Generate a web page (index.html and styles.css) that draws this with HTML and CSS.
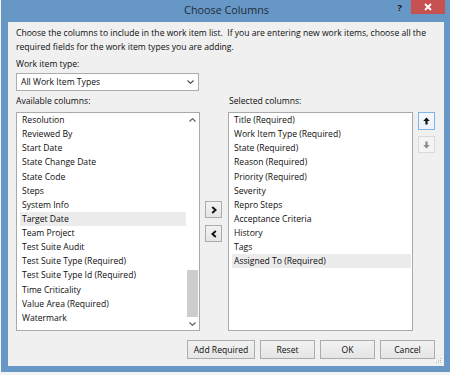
FILE: index.html
```html
<!DOCTYPE html>
<html lang="en">
<head>
  <meta charset="UTF-8">
  <title>Choose Columns</title>
  <link rel="stylesheet" href="styles.css">
</head>
<body>
  <div class="window">
    <div class="titlebar">
      <span></span>
      <span class="title">Choose Columns</span>
      <div class="controls">
        <span class="help">?</span>
        <span class="close">
          <svg width="8" height="8" viewBox="0 0 8 8"><path d="M1 1 L7 7 M7 1 L1 7" stroke="#fff" stroke-width="1.8" fill="none"/></svg>
        </span>
      </div>
    </div>

    <div class="content">
      <p class="intro">Choose the columns to include in the work item list.&nbsp; If you are entering new work items, choose all the<br>required fields for the work item types you are adding.</p>

      <div class="label">Work item type:</div>
      <div class="select">
        <span>All Work Item Types</span>
        <svg width="7" height="4" viewBox="0 0 7 4"><path d="M0.5 0.5 L3.5 3.3 L6.5 0.5" stroke="#444" stroke-width="1.1" fill="none"/></svg>
      </div>

      <div class="columns">
        <div class="label">Available columns:</div>
        <div></div>
        <div class="label label-right">Selected columns:</div>
        <div></div>

        <div class="listbox">
          <ul class="items">
            <li class="item">Resolution</li>
            <li class="item">Reviewed By</li>
            <li class="item">Start Date</li>
            <li class="item">State Change Date</li>
            <li class="item">State Code</li>
            <li class="item">Steps</li>
            <li class="item">System Info</li>
            <li class="item selected">Target Date</li>
            <li class="item">Team Project</li>
            <li class="item">Test Suite Audit</li>
            <li class="item">Test Suite Type (Required)</li>
            <li class="item">Test Suite Type Id (Required)</li>
            <li class="item">Time Criticality</li>
            <li class="item">Value Area (Required)</li>
            <li class="item">Watermark</li>
          </ul>
          <div class="scrollbar">
            <span class="scroll-arrow">
              <svg width="7" height="4" viewBox="0 0 7 4"><path d="M0.5 3.5 L3.5 0.7 L6.5 3.5" stroke="#555" stroke-width="1.1" fill="none"/></svg>
            </span>
            <div class="track"><div class="thumb"></div></div>
            <span class="scroll-arrow">
              <svg width="7" height="4" viewBox="0 0 7 4"><path d="M0.5 0.5 L3.5 3.3 L6.5 0.5" stroke="#555" stroke-width="1.1" fill="none"/></svg>
            </span>
          </div>
        </div>

        <div class="move-buttons">
          <button class="small-button">
            <svg width="6" height="8" viewBox="0 0 6 8"><path d="M1.2 1 L4.6 4 L1.2 7" stroke="#111" stroke-width="1.9" fill="none"/></svg>
          </button>
          <button class="small-button">
            <svg width="6" height="8" viewBox="0 0 6 8"><path d="M4.8 1 L1.4 4 L4.8 7" stroke="#111" stroke-width="1.9" fill="none"/></svg>
          </button>
        </div>

        <div class="listbox">
          <ul class="items items-selected">
            <li class="item">Title (Required)</li>
            <li class="item">Work Item Type (Required)</li>
            <li class="item">State (Required)</li>
            <li class="item">Reason (Required)</li>
            <li class="item">Priority (Required)</li>
            <li class="item">Severity</li>
            <li class="item">Repro Steps</li>
            <li class="item">Acceptance Criteria</li>
            <li class="item">History</li>
            <li class="item">Tags</li>
            <li class="item selected">Assigned To (Required)</li>
          </ul>
        </div>

        <div class="order-buttons">
          <button class="small-button focused">
            <svg width="7" height="8" viewBox="0 0 7 8"><path d="M3.5 0.5 L6.8 4 L4.6 4 L4.6 7.5 L2.4 7.5 L2.4 4 L0.2 4 Z" fill="#111"/></svg>
          </button>
          <button class="small-button disabled">
            <svg width="7" height="8" viewBox="0 0 7 8"><path d="M3.5 7.5 L6.8 4 L4.6 4 L4.6 0.5 L2.4 0.5 L2.4 4 L0.2 4 Z" fill="#8a8a8a"/></svg>
          </button>
        </div>
      </div>

      <div class="footer">
        <button class="button wide">Add Required</button>
        <button class="button">Reset</button>
        <button class="button">OK</button>
        <button class="button">Cancel</button>
      </div>

      <svg class="grip" width="6" height="6" viewBox="0 0 6 6">
        <rect x="4" y="0" width="1" height="1" fill="#b8b8b8"/>
        <rect x="2" y="2" width="1" height="1" fill="#b8b8b8"/>
        <rect x="4" y="2" width="1" height="1" fill="#b8b8b8"/>
        <rect x="0" y="4" width="1" height="1" fill="#b8b8b8"/>
        <rect x="2" y="4" width="1" height="1" fill="#b8b8b8"/>
        <rect x="4" y="4" width="1" height="1" fill="#b8b8b8"/>
      </svg>
    </div>
  </div>
</body>
</html>
```

FILE: styles.css
```css
:root {
  --frame: #6797c4;
  --close: #c75050;
  --panel: #f0f0f0;
  --text: #0d0d0d;
  --border: #a9a9a9;
  --button-border: #acacac;
  --row-selected: #ececec;
}

body {
  margin: 0;
  background-color: #f4f4f4;
  font-family: "Open Sans", "Noto Sans", sans-serif;
  font-size: 8.6px;
  line-height: 14px;
  color: var(--text);
}

.window {
  margin-left: 1px;
  width: 449px;
  height: 372px;
  box-sizing: border-box;
  padding: 0 6px 6px 7px;
  background-color: var(--frame);
  display: flex;
  flex-direction: column;
}

.titlebar {
  height: 22px;
  margin-right: -1px;
  display: grid;
  grid-template-columns: 1fr auto 1fr;
  align-items: start;
}

.title {
  font-size: 10.8px;
  line-height: 20px;
  color: #1f2b38;
}

.controls {
  display: flex;
  justify-content: flex-end;
  align-items: flex-start;
  gap: 9px;
}

.help {
  font-weight: bold;
  font-size: 9.5px;
  line-height: 15px;
  color: #1a1a1a;
}

.close {
  width: 34px;
  height: 14px;
  background-color: var(--close);
  display: flex;
  align-items: center;
  justify-content: center;
}

.content {
  flex-grow: 1;
  position: relative;
  background-color: var(--panel);
  padding: 4px 9px 7px 8px;
  display: flex;
  flex-direction: column;
}

.intro {
  margin: 0;
}

.label {
  margin-top: 3px;
}

.label-right {
  padding-left: 1px;
}

.select {
  margin-top: 2px;
  width: 183px;
  height: 18px;
  box-sizing: border-box;
  border: 1px solid var(--button-border);
  background-color: #fff;
  display: flex;
  align-items: center;
  justify-content: space-between;
  padding: 0 4px 0 4px;
}

.columns {
  display: grid;
  grid-template-columns: 184px 28px 185px 22px;
  grid-template-rows: auto 219px;
  row-gap: 4px;
}

.listbox {
  border: 1px solid var(--border);
  background-color: #fff;
  display: flex;
  overflow: hidden;
}

.items {
  list-style: none;
  margin: 0;
  padding: 0 0 0 3px;
  flex-grow: 1;
}

.items-selected {
  padding-right: 1px;
}

.item {
  height: 14.14px;
  line-height: 14.14px;
  padding-left: 2px;
  white-space: nowrap;
}

.item.selected {
  background-color: var(--row-selected);
}

.scrollbar {
  width: 13px;
  display: flex;
  flex-direction: column;
}

.scroll-arrow {
  height: 13px;
  display: flex;
  align-items: center;
  justify-content: center;
}

.track {
  flex-grow: 1;
  display: flex;
  flex-direction: column;
}

.thumb {
  margin: auto 1px 0;
  height: 47px;
  background-color: #cdcdcd;
}

.move-buttons {
  display: flex;
  flex-direction: column;
  justify-content: center;
  gap: 7px;
  padding-left: 5px;
}

.order-buttons {
  display: flex;
  flex-direction: column;
  gap: 6px;
  padding-left: 5px;
}

.small-button {
  width: 17px;
  height: 17px;
  padding: 0;
  border: 1px solid var(--button-border);
  background: linear-gradient(#f2f2f2, #e5e5e5);
  display: flex;
  align-items: center;
  justify-content: center;
}

.small-button.focused {
  height: 18px;
  border-color: #7eb4ea;
  background: linear-gradient(#f6f9fd, #eaf1f9);
}

.small-button.disabled {
  border-color: #d9d9d9;
  background: #f4f4f4;
}

.footer {
  margin-top: auto;
  display: flex;
  justify-content: flex-end;
  gap: 5px;
}

.button {
  width: 55px;
  height: 19px;
  padding: 0;
  border: 1px solid var(--button-border);
  background: linear-gradient(#f2f2f2, #e5e5e5);
  font-family: inherit;
  font-size: 8.6px;
  color: var(--text);
}

.button.wide {
  width: 68px;
}

.grip {
  position: absolute;
  right: 2px;
  bottom: 2px;
}
```
